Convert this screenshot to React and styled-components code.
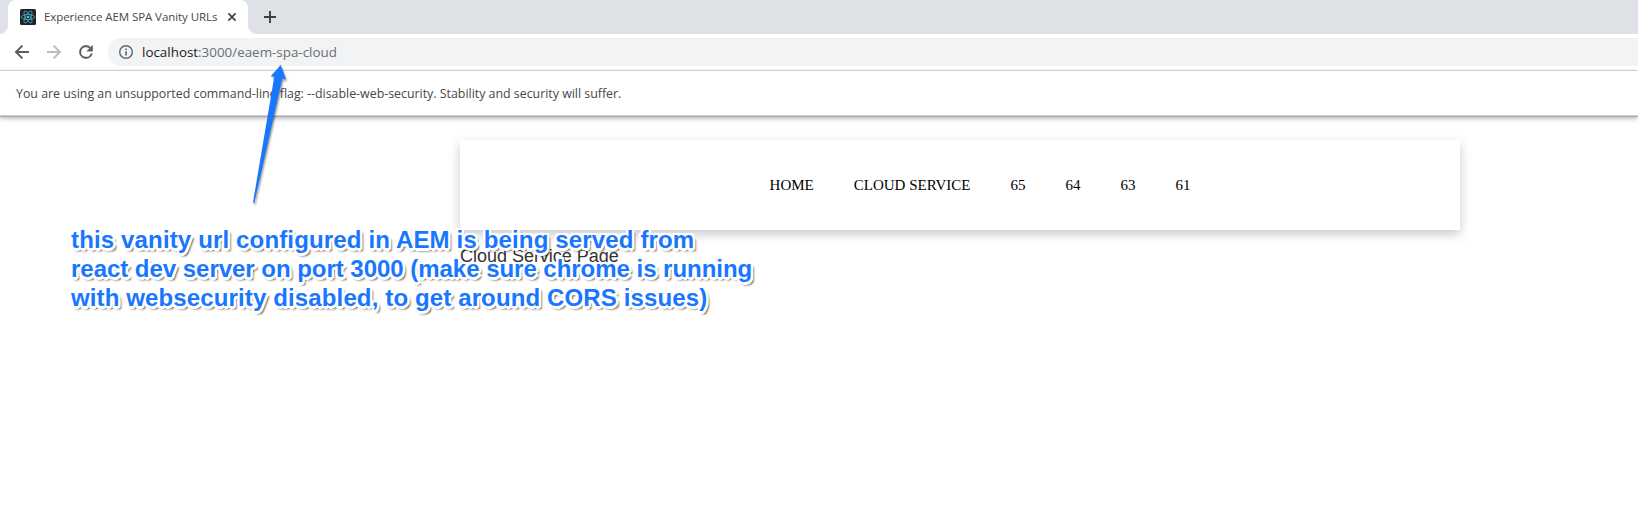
import React from "react";
import styled, { createGlobalStyle } from "styled-components";

const GlobalStyle = createGlobalStyle`
  *, *::before, *::after { box-sizing: border-box; }
  html, body, #root { height: 100%; }
  body { margin: 0; background: #fff; overflow: hidden; }
`;

const uiFont = `"Open Sans", "Noto Sans", sans-serif`;

const Window = styled.div`
  position: relative;
  display: flex;
  flex-direction: column;
  height: 530px;
  overflow: hidden;
  background: #fff;
  font-family: ${uiFont};
`;

const TabStrip = styled.div`
  display: flex;
  flex: none;
  height: 34px;
  padding-left: 8px;
  background: #dee1e6;
`;

const Tab = styled.div`
  position: relative;
  display: flex;
  align-items: center;
  width: 240px;
  height: 34px;
  padding: 0 11px 0 12px;
  background: #fff;
  border-radius: 8px 8px 0 0;

  &::before,
  &::after {
    content: "";
    position: absolute;
    bottom: 0;
    width: 8px;
    height: 8px;
  }
  &::before {
    left: -8px;
    background: radial-gradient(circle at 0 0, transparent 7.5px, #fff 8px);
  }
  &::after {
    right: -8px;
    background: radial-gradient(circle at 100% 0, transparent 7.5px, #fff 8px);
  }
`;

const TabTitle = styled.span`
  flex: 1;
  margin-left: 8px;
  color: #45484c;
  font-size: 11.5px;
  line-height: 16px;
  letter-spacing: -0.07px;
  white-space: nowrap;
`;

const NewTab = styled.div`
  display: flex;
  align-items: center;
  margin-left: 15px;
`;

const Toolbar = styled.div`
  display: flex;
  flex: none;
  align-items: center;
  height: 37px;
  padding-left: 12px;
  border-bottom: 1px solid #d8dadc;
`;

const NavButtons = styled.div`
  display: flex;
  gap: 12px;
`;

const AddressBar = styled.div`
  display: flex;
  flex: 1;
  align-items: center;
  height: 28px;
  margin-left: 12px;
  padding-left: 10px;
  background: #f1f3f4;
  border-radius: 14px 0 0 14px;
`;

const Url = styled.span`
  margin-left: 8px;
  color: #6a6e73;
  font-size: 13.4px;
  line-height: 20px;
  white-space: nowrap;
`;

const Host = styled.span`
  color: #202124;
`;

const InfoBar = styled.div`
  display: flex;
  flex: none;
  align-items: center;
  height: 45px;
  padding: 0 0 0 16px;
  color: #45484c;
  font-size: 12.4px;
  letter-spacing: -0.01px;
  border-bottom: 1px solid #d0d2d2;
  box-shadow: 0 1px 0 #a9abab, 0 2px 5px rgba(0, 0, 0, 0.34);
  white-space: nowrap;
`;

const Page = styled.main`
  width: 1000px;
  margin: 24px 0 0 460px;
`;

const NavCard = styled.nav`
  display: flex;
  align-items: center;
  justify-content: center;
  gap: 40px;
  height: 90px;
  padding-left: 40px;
  background: #fff;
  box-shadow: 0 4px 10px rgba(0, 0, 0, 0.22);
`;

const NavLink = styled.a`
  color: #000;
  font: 15px/18px "Liberation Serif", serif;
`;

const PageTitle = styled.div`
  margin-top: 15px;
  color: #333;
  font: 18px/22px "Liberation Sans", sans-serif;
  letter-spacing: -0.02px;
`;

const Note = styled.div`
  position: absolute;
  left: 71px;
  top: 225px;
  color: #1976ff;
  font: bold 24px/29px "Liberation Sans", sans-serif;
  white-space: nowrap;
  text-shadow:
    2px 0 0 #fff, -2px 0 0 #fff, 0 2px 0 #fff, 0 -2px 0 #fff,
    2px 2px 0 #fff, -2px 2px 0 #fff, 2px -2px 0 #fff, -2px -2px 0 #fff,
    2.5px 1px 0 #fff, 1px 2.5px 0 #fff,
    3px 3px 2px rgba(0, 0, 0, 0.6), 2px 3px 3px rgba(0, 0, 0, 0.35);
`;

const NoteLine = styled.div`
  letter-spacing: ${(p) => p.$spacing}px;
`;

const Pointer = styled.svg`
  position: absolute;
  left: 244px;
  top: 58px;
  filter: drop-shadow(1px 2px 1px rgba(0, 0, 0, 0.45));
`;

const ReactFavicon = () => (
  <svg width="16" height="16" viewBox="0 0 16 16">
    <rect width="16" height="16" rx="1.5" fill="#202226" />
    <g fill="none" stroke="#48b4d0" strokeWidth="0.75">
      <ellipse cx="8" cy="8" rx="6.7" ry="2.6" />
      <ellipse cx="8" cy="8" rx="6.7" ry="2.6" transform="rotate(60 8 8)" />
      <ellipse cx="8" cy="8" rx="6.7" ry="2.6" transform="rotate(120 8 8)" />
    </g>
    <circle cx="8" cy="8" r="1.3" fill="#52bfdb" />
  </svg>
);

const CloseIcon = () => (
  <svg width="10" height="10" viewBox="0 0 10 10">
    <path d="M1.4 1.4 8.6 8.6M8.6 1.4 1.4 8.6" stroke="#404346" strokeWidth="1.7" />
  </svg>
);

const PlusIcon = () => (
  <svg width="14" height="14" viewBox="0 0 14 14">
    <path d="M7 1v12M1 7h12" stroke="#3c4043" strokeWidth="1.9" />
  </svg>
);

const BackIcon = () => (
  <svg width="20" height="20" viewBox="0 0 20 20" fill="none" stroke="#5a5e63" strokeWidth="2">
    <path d="M17 10H4.4M10.4 3.6 4 10l6.4 6.4" />
  </svg>
);

const ForwardIcon = () => (
  <svg width="20" height="20" viewBox="0 0 20 20" fill="none" stroke="#babcbe" strokeWidth="2">
    <path d="M3 10h12.6M9.6 3.6 16 10l-6.4 6.4" />
  </svg>
);

const ReloadIcon = () => (
  <svg width="20" height="20" viewBox="0 0 24 24" fill="#5a5e63" stroke="#5a5e63" strokeWidth="0.5">
    <path d="M17.65 6.35A7.96 7.96 0 0 0 12 4a8 8 0 1 0 7.73 10h-2.08A6 6 0 1 1 12 6c1.66 0 3.14.69 4.22 1.78L13 11h7V4z" />
  </svg>
);

const InfoIcon = () => (
  <svg width="16" height="16" viewBox="0 0 16 16">
    <circle cx="8" cy="8" r="6.3" fill="none" stroke="#5f6368" strokeWidth="1.4" />
    <path d="M8 7.2v4.2M8 4.5v1.6" stroke="#5f6368" strokeWidth="1.6" />
  </svg>
);

const links = ["HOME", "CLOUD SERVICE", "65", "64", "63", "61"];

const noteLines = [
  { text: "this vanity url configured in AEM is being served from", spacing: 0.15 },
  { text: "react dev server on port 3000 (make sure chrome is running", spacing: -0.03 },
  { text: "with websecurity disabled, to get around CORS issues)", spacing: 0.13 },
];

export default function App() {
  return (
    <Window>
      <GlobalStyle />
      <TabStrip>
        <Tab>
          <ReactFavicon />
          <TabTitle>Experience AEM SPA Vanity URLs</TabTitle>
          <CloseIcon />
        </Tab>
        <NewTab>
          <PlusIcon />
        </NewTab>
      </TabStrip>
      <Toolbar>
        <NavButtons>
          <BackIcon />
          <ForwardIcon />
          <ReloadIcon />
        </NavButtons>
        <AddressBar>
          <InfoIcon />
          <Url>
            <Host>localhost</Host>:3000/eaem-spa-cloud
          </Url>
        </AddressBar>
      </Toolbar>
      <InfoBar>
        You are using an unsupported command-line flag: --disable-web-security. Stability and
        security will suffer.
      </InfoBar>
      <Page>
        <NavCard>
          {links.map((label) => (
            <NavLink key={label}>{label}</NavLink>
          ))}
        </NavCard>
        <PageTitle>Cloud Service Page</PageTitle>
      </Page>
      <Pointer width="50" height="150" viewBox="244 58 50 150">
        <path d="M280.7 65 286 79.2 282.3 78.2 254.3 203 253 202.5 274.3 76.8 270.7 76.3Z" fill="#1976ff" />
      </Pointer>
      <Note>
        {noteLines.map((line) => (
          <NoteLine key={line.text} $spacing={line.spacing}>
            {line.text}
          </NoteLine>
        ))}
      </Note>
    </Window>
  );
}
